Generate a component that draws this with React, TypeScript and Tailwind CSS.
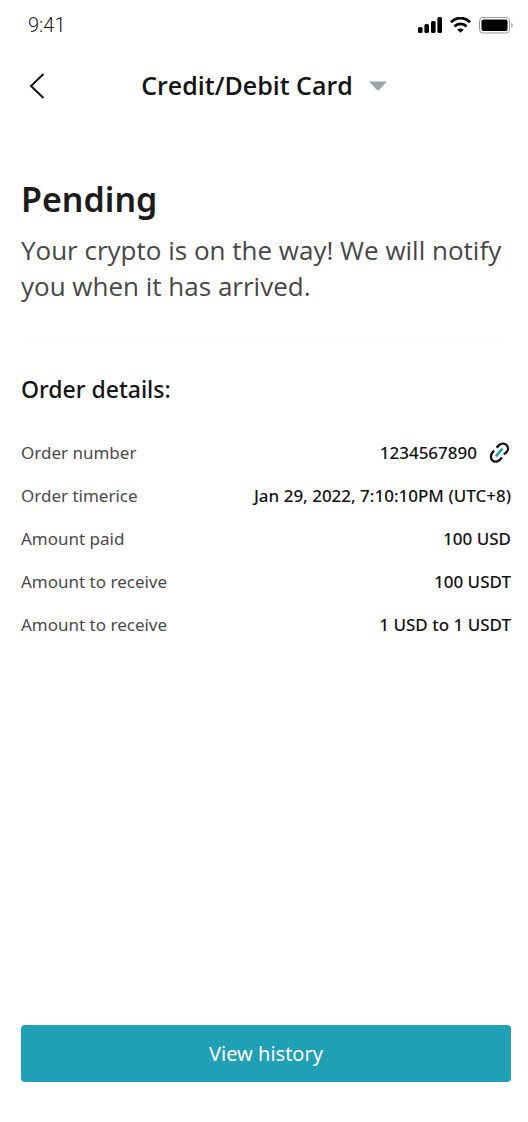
import type { ReactNode } from "react";

type DetailRow = {
  label: string;
  value: string;
  action?: ReactNode;
};

const details: DetailRow[] = [
  {
    label: "Order number",
    value: "1234567890",
    action: (
      <button type="button" aria-label="Open transaction link">
        <LinkIcon />
      </button>
    ),
  },
  { label: "Order timerice", value: "Jan 29, 2022, 7:10:10PM (UTC+8)" },
  { label: "Amount paid", value: "100 USD" },
  { label: "Amount to receive", value: "100 USDT" },
  { label: "Amount to receive", value: "1 USD to 1 USDT" },
];

function LinkIcon() {
  return (
    <svg width="22" height="22" viewBox="0 0 22 22" fill="none" strokeWidth="2.4">
      <path
        d="M7.6 5.6 9.8 3.3C12 1.1 15.6 1 17.6 3.1c2 2 1.8 5.2-.4 7.4L14.8 12.4"
        stroke="#141414"
      />
      <path
        d="M5 8.6 3.6 10.4c-2.1 2.3-2.2 6-.3 7.9 2 2 5.4 1.7 7.5-.4l2-2.4"
        stroke="#141414"
      />
      <path d="M6.8 14.4 13.4 6.6" stroke="#1fa0b5" />
    </svg>
  );
}

function StatusBar() {
  return (
    <div className="flex h-[50px] items-center justify-between pr-[14px] pl-7">
      <span className="font-['Roboto',sans-serif] text-xl font-light text-[#141414]">
        9:41
      </span>
      <div className="flex items-center gap-2">
        <svg width="24" height="16" viewBox="0 0 24 16" fill="#000">
          <rect x="0" y="10" width="4.6" height="6" rx="1.6" />
          <rect x="6.4" y="7" width="4.6" height="9" rx="1.6" />
          <rect x="13" y="4" width="4.6" height="12" rx="1.6" />
          <rect x="19.4" y="0" width="4.6" height="16" rx="1.6" />
        </svg>
        <svg width="21" height="16" viewBox="0 0 21 16" fill="none">
          <path
            d="M1 5.2C6.3-.2 14.7-.2 20 5.2M4.4 9.4C7.9 6 13.1 6 16.6 9.4"
            stroke="#000"
            strokeWidth="2.9"
          />
          <path d="M7.2 12.7c1.9-1.6 4.7-1.6 6.6 0L10.5 15.8z" fill="#000" />
        </svg>
        <svg width="35" height="17" viewBox="0 0 35 17">
          <rect
            x="0.5"
            y="0.5"
            width="30"
            height="15.5"
            rx="3.5"
            fill="none"
            stroke="#999"
          />
          <rect x="2.5" y="2.5" width="26" height="11.5" rx="1.8" />
          <path d="M32.4 5.8v5c1.8-.8 1.8-4.2 0-5z" fill="#999" />
        </svg>
      </div>
    </div>
  );
}

function Header() {
  return (
    <header className="grid h-[72px] grid-cols-[1fr_auto_1fr] items-center px-7">
      <button type="button" aria-label="Back" className="justify-self-start">
        <svg width="18" height="28" viewBox="0 0 18 28" fill="none">
          <path d="M15.5 2 3 14l12.5 12" stroke="#141414" strokeWidth="2" />
        </svg>
      </button>
      <button
        type="button"
        className="flex items-center gap-4 font-['Open_Sans',sans-serif] text-[25px] font-semibold text-[#141414]"
      >
        Credit/Debit Card
        <svg width="18" height="10" viewBox="0 0 18 10" fill="#9ca3a8">
          <path d="M1.6.5h14.8c.9 0 1.1.7.5 1.3l-6.6 7c-.7.8-1.9.8-2.6 0l-6.6-7C.5 1.2.7.5 1.6.5z" />
        </svg>
      </button>
    </header>
  );
}

export default function App() {
  return (
    <div className="flex min-h-screen flex-col bg-white font-['Noto_Sans',sans-serif]">
      <StatusBar />
      <Header />
      <main className="flex grow flex-col pt-[52px] pr-[17px] pb-10 pl-[21px]">
        <h1 className="text-[34px] leading-[50px] font-semibold text-[#1c1c1c]">
          Pending
        </h1>
        <p className="mt-2 font-['Open_Sans',sans-serif] text-[26px] leading-9 text-[#474747]">
          Your crypto is on the way! We will notify you when it has arrived.
        </p>
        <hr className="mt-9 border-[#fcfcfc]" />
        <h2 className="mt-8 text-[23px] leading-8 font-medium text-[#141414]">
          Order details:
        </h2>
        <dl className="mt-9 flex flex-col gap-[19px] text-[17px] leading-6">
          {details.map((row, i) => (
            <div key={i} className="flex items-center justify-between">
              <dt className="text-[#4a4a4a]">{row.label}</dt>
              <dd className="flex items-center gap-3 font-medium text-[#141414]">
                {row.value}
                {row.action}
              </dd>
            </div>
          ))}
        </dl>
        <button
          type="button"
          className="mt-auto h-[57px] w-full rounded bg-[#1fa0b5] text-xl text-white"
        >
          View history
        </button>
      </main>
    </div>
  );
}
